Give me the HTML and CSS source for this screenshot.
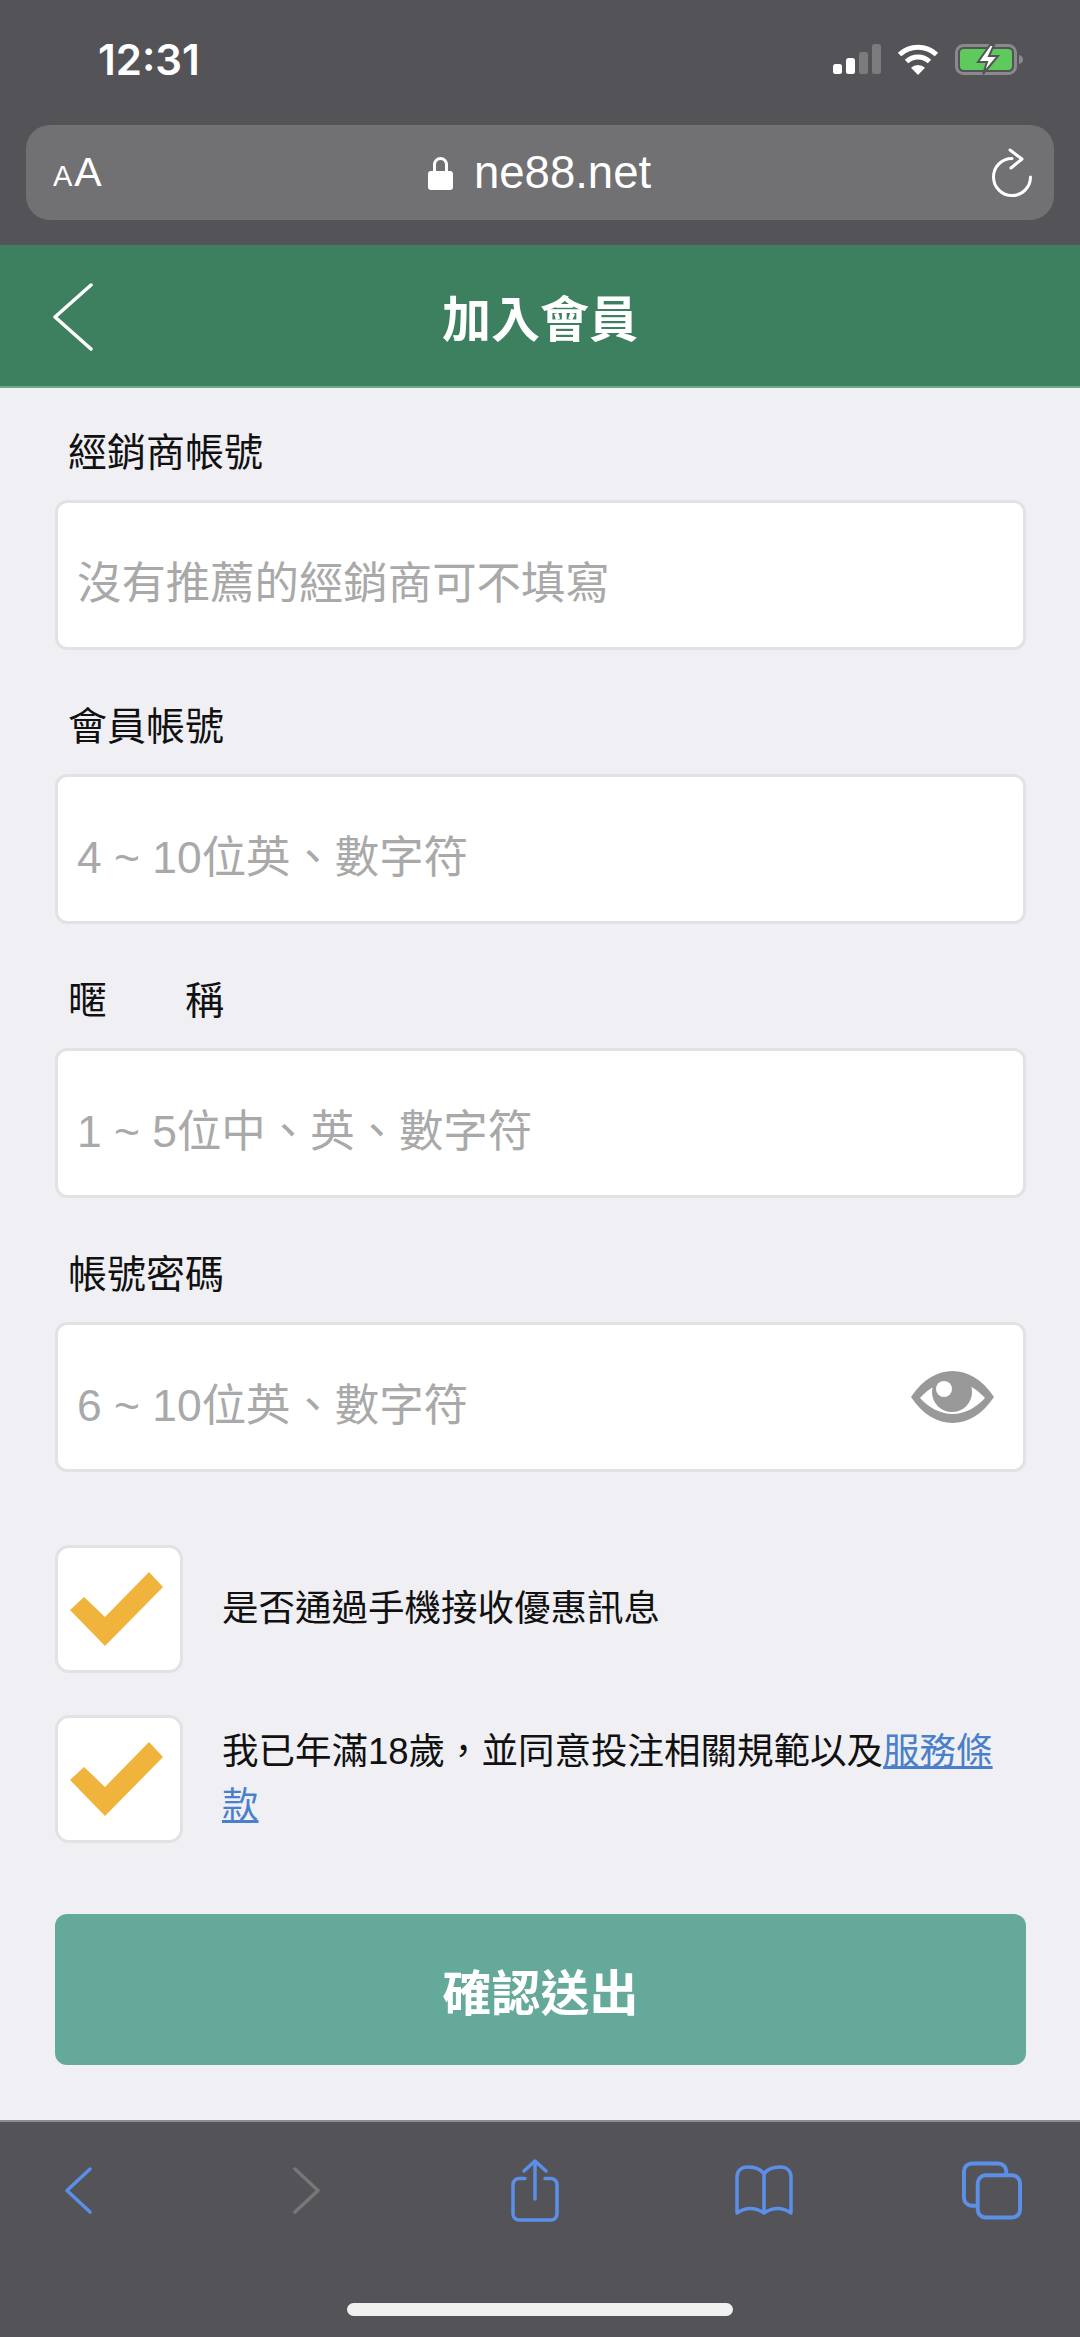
FILE: index.html
```html
<!DOCTYPE html>
<html lang="zh-Hant">
<head>
  <meta charset="utf-8">
  <title>加入會員</title>
  <link rel="stylesheet" href="styles.css">
</head>
<body>
  <div class="screen">
    <!-- Safari chrome, top -->
    <div class="browser-top">
      <div class="status-bar">
        <span class="time">12:31</span>
        <div class="status-icons">
          <svg class="signal" width="48" height="30" viewBox="0 0 48 30"><rect x="0" y="20" width="9" height="10" rx="2.5" fill="#fff"/><rect x="13" y="14" width="9" height="16" rx="2.5" fill="#fff"/><rect x="26" y="8" width="9" height="22" rx="2.5" fill="#7b7b7e"/><rect x="39" y="0" width="9" height="30" rx="2.5" fill="#7b7b7e"/></svg>
          <svg class="wifi" width="42" height="31" viewBox="0 0 42 31" fill="none" stroke="#fff" stroke-width="5"><path d="M2.5 10.5a27 27 0 0 1 37 0"/><path d="M9.5 17.5a17 17 0 0 1 23 0"/><path d="M21 31l-7-7.2a10 10 0 0 1 14 0z" fill="#fff" stroke="none"/></svg>
          <svg class="battery" width="68" height="31" viewBox="0 0 68 31"><rect x="1.5" y="1.5" width="59" height="28" rx="7" fill="none" stroke="#8a8a8c" stroke-width="3"/><rect x="5" y="5" width="52" height="21" rx="4" fill="#5ec95c"/><path d="M64 11c3 .5 4 2.500 4 4.500s-1 4-4 4.500z" fill="#8a8a8c"/><path d="M35 1L23 18h9l-4 12 15-18h-9l5-11z" fill="#fff" stroke="#545358" stroke-width="2"/></svg>
        </div>
      </div>
      <div class="url-bar">
        <span class="text-size"><small>A</small>A</span>
        <div class="address">
          <svg width="25" height="34" viewBox="0 0 25 34"><path d="M6.500 16V8.500a6 6 0 0 1 12 0V16" fill="none" stroke="#fff" stroke-width="3"/><rect x="0" y="15" width="25" height="19" rx="3" fill="#fff"/></svg>
          <span>ne88.net</span>
        </div>
        <svg class="reload" width="42" height="50" viewBox="0 0 42 50" fill="none" stroke="#fff" stroke-width="3" stroke-linecap="round" stroke-linejoin="round"><path d="M21 10.500A18.500 18.500 0 1 0 39.500 29"/><path d="M19 2l12 9-11 9"/></svg>
      </div>
    </div>

    <header class="page-header">
      <svg class="header-back" width="40" height="68" viewBox="0 0 40 68" fill="none" stroke="#fff" stroke-width="3.500" stroke-linecap="round" stroke-linejoin="round"><path d="M38 2L2 34l36 32"/></svg>
      <h1>加入會員</h1>
    </header>

    <main class="form">
      <div class="form-group">
        <label class="form-label">經銷商帳號</label>
        <div class="field"><span class="placeholder">沒有推薦的經銷商可不填寫</span></div>
      </div>
      <div class="form-group">
        <label class="form-label">會員帳號</label>
        <div class="field"><span class="placeholder">4 ~ 10位英、數字符</span></div>
      </div>
      <div class="form-group">
        <label class="form-label">暱　　稱</label>
        <div class="field"><span class="placeholder">1 ~ 5位中、英、數字符</span></div>
      </div>
      <div class="form-group">
        <label class="form-label">帳號密碼</label>
        <div class="field">
          <span class="placeholder">6 ~ 10位英、數字符</span>
          <svg class="eye" width="83" height="52" viewBox="0 0 83 52"><path fill-rule="evenodd" fill="#999" d="M0 26C12 8 27 0 41.500 0S71 8 83 26C71 44 56 52 41.500 52S12 44 0 26zM9 27c8 9 20 16 32.500 16S66 36 74 27C66 18 54 10 41.500 10S17 18 9 27z"/><circle cx="41" cy="21" r="20" fill="#999"/><circle cx="33" cy="18" r="8" fill="#fff"/></svg>
        </div>
      </div>

      <div class="checks">
        <div class="check-row">
          <span class="checkbox"><svg width="128" height="128" viewBox="0 0 128 128"><path d="M15 65L29 52 50 72 94 27 108 42 50 101z" fill="#f0b43c"/></svg></span>
          <p>是否通過手機接收優惠訊息</p>
        </div>
        <div class="check-row">
          <span class="checkbox"><svg width="128" height="128" viewBox="0 0 128 128"><path d="M15 65L29 52 50 72 94 27 108 42 50 101z" fill="#f0b43c"/></svg></span>
          <p>我已年滿18歲，並同意投注相關規範以及<a href="#">服務條款</a></p>
        </div>
      </div>

      <button class="submit-btn">確認送出</button>
    </main>

    <!-- Safari chrome, bottom -->
    <footer class="browser-bottom">
      <div class="toolbar">
        <span class="tool"><svg width="27" height="47" viewBox="0 0 27 47" fill="none" stroke="#5b8fe8" stroke-width="3.500" stroke-linecap="round" stroke-linejoin="round"><path d="M25 2L2 23.500 25 45"/></svg></span>
        <span class="tool"><svg width="27" height="47" viewBox="0 0 27 47" fill="none" stroke="#77777a" stroke-width="3.500" stroke-linecap="round" stroke-linejoin="round"><path d="M2 2l23 21.500L2 45"/></svg></span>
        <span class="tool"><svg width="48" height="63" viewBox="0 0 48 63" fill="none" stroke="#5b8fe8" stroke-width="3.500" stroke-linecap="round" stroke-linejoin="round"><path d="M14 19.500H8a6 6 0 0 0-6 6V55a6 6 0 0 0 6 6h32a6 6 0 0 0 6-6V25.500a6 6 0 0 0-6-6h-6"/><path d="M24 40V2M13 12L24 2l11 10"/></svg></span>
        <span class="tool"><svg width="58" height="50" viewBox="0 0 58 50" fill="none" stroke="#5b8fe8" stroke-width="3.500" stroke-linecap="round" stroke-linejoin="round"><path d="M29 9C25 3 19 2 13 2 6 2 2 6 2 12v36q13-9 27 0 14-9 27 0V12c0-6-4-10-11-10-6 0-12 1-16 7zV48"/></svg></span>
        <span class="tool"><svg width="61" height="60" viewBox="0 0 61 60" fill="none" stroke="#5b8fe8" stroke-width="4"><path d="M15 46H10a8 8 0 0 1-8-8V11a8 8 0 0 1 8-8h27a8 8 0 0 1 8 8v4"/><rect x="16" y="15" width="43" height="43" rx="8"/></svg></span>
      </div>
      <div class="home-indicator"></div>
    </footer>
  </div>
</body>
</html>
```

FILE: styles.css
```css
* { box-sizing: border-box; }
body {
  margin: 0;
  font-family: "Liberation Sans", "Noto Sans CJK TC", sans-serif;
  background-color: #efeff4;
  color: #111;
}
.screen {
  display: flex;
  flex-direction: column;
  width: 1080px;
  height: 2337px;
  overflow: hidden;
}

/* Top browser chrome */
.browser-top { height: 245px; background-color: #545358; color: #fff; }
.status-bar {
  display: flex;
  align-items: center;
  justify-content: space-between;
  height: 125px;
  padding: 0 57px 7px 98px;
}
.time { font-family: Inter, sans-serif; font-size: 42px; font-weight: 600; }
.status-icons { display: flex; align-items: center; gap: 16px; }
.url-bar {
  display: flex;
  align-items: center;
  justify-content: space-between;
  position: relative;
  height: 95px;
  margin: 0 26px;
  padding: 0 21px 0 27px;
  border-radius: 24px;
  background-color: #717173;
}
.text-size { font-size: 41px; }
.text-size small { font-size: 29px; margin-right: 2px; }
.address {
  display: flex;
  align-items: center;
  gap: 21px;
  position: absolute;
  left: 402px;
  font-size: 45.500px;
}

/* Page header */
.page-header {
  display: flex;
  align-items: center;
  justify-content: center;
  position: relative;
  height: 143px;
  background-color: #3d8060;
  border-bottom: 2px solid #6fa78d;
}
.page-header h1 { margin: 0; font-size: 49px; font-weight: 700; color: #fff; }
.header-back { position: absolute; left: 53px; top: 38px; }

/* Form */
.form { flex: 1; padding: 18px 54px 0 55px; }
.form-group { margin-bottom: 30px; }
.form-label { display: flex; align-items: center; height: 94px; padding: 0 0 8px 13px; font-size: 39px; }
.field {
  display: flex;
  align-items: center;
  justify-content: space-between;
  height: 150px;
  padding: 8px 29px 0 19px;
  background-color: #fff;
  border: 3px solid #e2e2e4;
  border-radius: 12px;
}
.placeholder { font-size: 44.400px; color: #a9a9a9; }
.eye { margin-top: -8px; }

.checks { display: flex; flex-direction: column; gap: 42px; margin-top: 73px; }
.check-row { display: flex; align-items: center; gap: 39px; padding-right: 30px; }
.check-row p { margin: 0; font-size: 36.500px; line-height: 54px; }
.check-row a { color: #4a7fc9; }
.checkbox {
  display: block;
  flex: none;
  width: 128px;
  height: 128px;
  background-color: #fff;
  border: 3px solid #e2e2e4;
  border-radius: 14px;
}
.checkbox svg { display: block; margin: -3px; }

.submit-btn {
  display: block;
  width: 100%;
  height: 151px;
  margin-top: 71px;
  border: none;
  border-radius: 12px;
  background-color: #65a99a;
  color: #fff;
  font-family: inherit;
  font-size: 49px;
  font-weight: 700;
}

/* Bottom browser chrome */
.browser-bottom { height: 217px; background-color: #545358; border-top: 2px solid #8d8d90; }
.toolbar {
  display: flex;
  align-items: center;
  justify-content: space-between;
  height: 136px;
  padding: 0 58px 0 48px;
}
.tool { display: flex; justify-content: center; width: 60px; }
.home-indicator {
  width: 386px;
  height: 13px;
  margin: 45px auto 0;
  border-radius: 7px;
  background-color: #f0f0f0;
}
```
